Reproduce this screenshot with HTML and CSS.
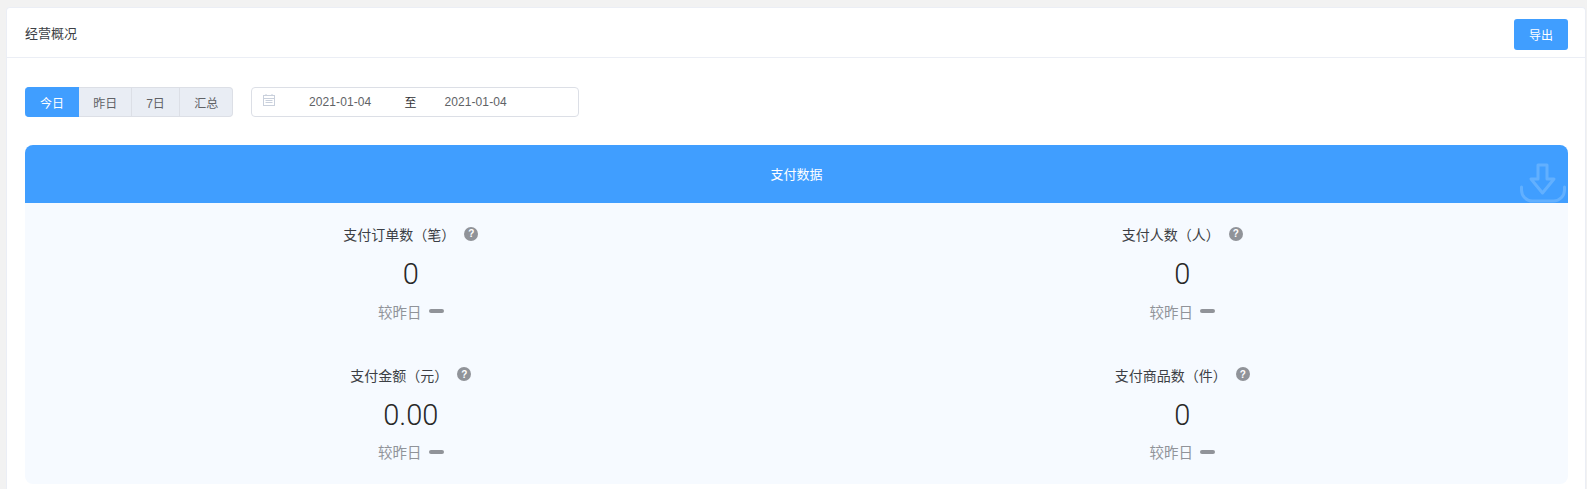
FILE: index.html
```html
<!DOCTYPE html>
<html lang="zh-CN">
<head>
<meta charset="utf-8">
<title>经营概况</title>
<link rel="stylesheet" href="styles.css">
</head>
<body>
<section class="card">
  <header class="card-head">
    <span class="card-title">经营概况</span>
    <button class="btn-export">导出</button>
  </header>
  <div class="card-body">
    <div class="filters">
      <div class="tabs">
        <span class="tab tab-active">今日</span>
        <span class="tab">昨日</span>
        <span class="tab">7日</span>
        <span class="tab">汇总</span>
      </div>
      <div class="range">
        <svg class="cal" viewBox="0 0 12 12" width="12" height="12" fill="none" stroke="#c9d0dc" stroke-width="1">
          <rect x="0.500" y="1.500" width="11" height="10"/>
          <path d="M0.500 4.500h11M3 0v2M9 0v2M2.500 6.500h7M2.500 8.500h7"/>
        </svg>
        <span class="date date-a">2021-01-04</span>
        <span class="sep">至</span>
        <span class="date">2021-01-04</span>
      </div>
    </div>
    <div class="panel">
      <div class="panel-head">
        <span class="panel-title">支付数据</span>
        <svg class="panel-icon" viewBox="0 0 46 40" width="46" height="40" fill="none" stroke="#62b0ff" stroke-width="3" stroke-linejoin="round">
          <path d="M18 2h9v14h7L22.500 30 11 16h7z"/>
          <path d="M1.500 24v3a11 11 0 0 0 11 11h21a11 11 0 0 0 11-11v-3" stroke-linecap="round"/>
        </svg>
      </div>
      <div class="stats">
        <div class="stat">
          <div class="stat-label"><span>支付订单数（笔）</span><i class="help">?</i></div>
          <div class="stat-num">0</div>
          <div class="stat-cmp"><span>较昨日</span><i class="dash"></i></div>
        </div>
        <div class="stat">
          <div class="stat-label"><span>支付人数（人）</span><i class="help">?</i></div>
          <div class="stat-num">0</div>
          <div class="stat-cmp"><span>较昨日</span><i class="dash"></i></div>
        </div>
        <div class="stat">
          <div class="stat-label"><span>支付金额（元）</span><i class="help">?</i></div>
          <div class="stat-num">0.00</div>
          <div class="stat-cmp"><span>较昨日</span><i class="dash"></i></div>
        </div>
        <div class="stat">
          <div class="stat-label"><span>支付商品数（件）</span><i class="help">?</i></div>
          <div class="stat-num">0</div>
          <div class="stat-cmp"><span>较昨日</span><i class="dash"></i></div>
        </div>
      </div>
    </div>
  </div>
</section>
</body>
</html>
```

FILE: styles.css
```css
* { box-sizing: border-box; }
html, body { height: 100%; }
body {
  margin: 0;
  padding: 7px 1px 0 6px;
  background: #f2f2f2;
  overflow: hidden;
  font-family: "Liberation Sans", "Noto Sans CJK SC", sans-serif;
  color: #303133;
}
.card {
  background: #fff;
  border: 1px solid #ebeef5;
  border-bottom: 0;
  border-radius: 4px 4px 0 0;
  height: 482px;
  overflow: hidden;
}
.card-head {
  height: 50px;
  border-bottom: 1px solid #ebeef5;
  display: flex;
  align-items: center;
  justify-content: space-between;
  padding: 0 17px 0 18px;
}
.card-title { font-size: 13px; color: #3c3f45; }
.btn-export {
  width: 54px;
  height: 31px;
  margin-top: 3px;
  padding: 0;
  border: 0;
  border-radius: 3px;
  background: #409eff;
  color: #fff;
  font: inherit;
  font-size: 12px;
}
.card-body { padding: 29px 17px 0 18px; }
.filters { display: flex; align-items: center; gap: 18px; height: 30px; }
.tabs {
  display: flex;
  width: 208px;
  height: 30px;
  font-size: 12px;
  color: #606266;
}
.tab {
  display: flex;
  align-items: center;
  justify-content: center;
  flex: 0 0 48px;
  padding-left: 1px;
  background: #e9edf4;
  border: 1px solid #dcdfe6;
  border-left: 0;
}
.tab:last-child { flex: 0 0 53.500px; border-radius: 0 4px 4px 0; }
.tab:nth-child(2) { flex-basis: 52.500px; }
.tab-active {
  flex: 0 0 54px;
  background: #409eff;
  border-color: #409eff;
  color: #fff;
  border-radius: 4px 0 0 4px;
}
.range {
  display: flex;
  align-items: center;
  width: 328px;
  height: 30px;
  padding-left: 11px;
  border: 1px solid #dcdfe6;
  border-radius: 4px;
  font-size: 12px;
}
.cal { margin-top: -5px; }
.date { color: #606266; letter-spacing: 0.100px; margin-top: -1px; }
.date-a { margin-left: 34px; }
.sep { margin: -1px 28px 0 33px; color: #303133; }
.panel { margin-top: 28px; }
.panel-head {
  position: relative;
  height: 58px;
  overflow: hidden;
  display: flex;
  align-items: center;
  justify-content: center;
  background: #409eff;
  border-radius: 8px 8px 0 0;
  color: #fff;
  font-size: 13px;
}
.panel-title { margin-top: -2px; }
.panel-icon { position: absolute; right: 2px; top: 18px; }
.stats {
  display: grid;
  grid-template-columns: 1fr 1fr;
  grid-auto-rows: 140.500px;
  background: #f6faff;
  border-radius: 0 0 8px 8px;
}
.stat {
  display: flex;
  flex-direction: column;
  align-items: center;
  padding-top: 21px;
}
.stat-label {
  display: flex;
  align-items: center;
  gap: 9px;
  height: 20px;
  font-size: 14px;
  color: #3c3f45;
}
.help {
  display: flex;
  align-items: center;
  justify-content: center;
  width: 14px;
  height: 14px;
  margin-top: -1px;
  border-radius: 50%;
  background: #909399;
  color: #fff;
  font-size: 10px;
  font-weight: 700;
  font-style: normal;
}
.stat-num {
  margin-top: 10px;
  height: 40px;
  line-height: 40px;
  font-family: Roboto, "Liberation Sans", sans-serif;
  font-size: 29px;
  font-weight: 300;
  color: #282828;
}
.stat-cmp {
  display: flex;
  align-items: center;
  gap: 7px;
  height: 20px;
  margin-top: 7px;
  font-size: 14.500px;
  color: #909399;
}
.dash {
  width: 15px;
  height: 4px;
  border-radius: 2px;
  background: #909399;
}
```
